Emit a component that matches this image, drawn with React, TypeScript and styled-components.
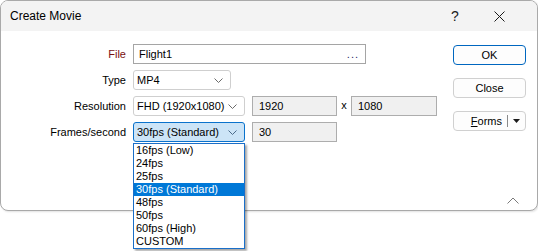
import React from "react";
import styled, { createGlobalStyle } from "styled-components";

const GlobalStyle = createGlobalStyle`
  html, body {
    margin: 0;
    min-height: 251px;
    background: #ffffff;
  }
  body {
    font-family: "Liberation Sans", Arial, sans-serif;
    font-size: 11px;
    color: #000;
  }
`;

const Window = styled.div`
  width: 538px;
  height: 211px;
  box-sizing: border-box;
  border: 1px solid #a9a9a9;
  border-radius: 8px;
  display: flex;
  flex-direction: column;
  background: #ffffff;
  box-shadow: 1px 1px 2px rgba(0, 0, 0, 0.12);
`;

const TitleBar = styled.div`
  height: 30px;
  display: flex;
  align-items: center;
  background: #f3f3f3;
  border-radius: 7px 7px 0 0;
  padding-left: 9px;
`;

const Title = styled.span`
  font-size: 12px;
  flex: 1;
`;

const TitleButton = styled.div<{ $end?: boolean }>`
  width: 44px;
  height: 30px;
  margin-right: ${(p) => (p.$end ? 16 : 0)}px;
  display: flex;
  align-items: center;
  justify-content: center;
  font-size: 14px;
  color: #1a1a1a;
`;

const Body = styled.div`
  flex: 1;
  display: flex;
  flex-direction: column;
`;

const Main = styled.div`
  display: flex;
  padding-top: 13px;
`;

const Form = styled.div`
  display: grid;
  grid-template-columns: 106px auto;
  column-gap: 7px;
  row-gap: 6px;
  padding-left: 19px;
  align-items: center;
`;

const Label = styled.label<{ $accent?: boolean }>`
  text-align: right;
  color: ${(p) => (p.$accent ? "#7a1010" : "#000")};
  font-size: 11px;
`;

const Row = styled.div`
  display: flex;
  align-items: center;
`;

const TextBox = styled.div<{ $w: number }>`
  width: ${(p) => p.$w}px;
  height: 20px;
  box-sizing: border-box;
  border: 1px solid #a5a5a5;
  background: #ffffff;
  display: flex;
  align-items: center;
  padding: 0 6px 0 5px;
`;

const Ellipsis = styled.span`
  margin-left: auto;
  color: #2a2a6a;
  letter-spacing: 1px;
`;

const ReadOnlyBox = styled.div<{ $w: number }>`
  width: ${(p) => p.$w}px;
  height: 20px;
  box-sizing: border-box;
  border: 1px solid #adadad;
  background: #f0f0f0;
  display: flex;
  align-items: center;
  padding-left: 6px;
`;

const Times = styled.span`
  width: 14px;
  text-align: center;
  padding-bottom: 2px;
`;

const SelectWrap = styled.div<{ $gap?: number }>`
  position: relative;
  margin-right: ${(p) => p.$gap ?? 0}px;
`;

const Select = styled.div<{ $w: number; $focused?: boolean }>`
  width: ${(p) => p.$w}px;
  height: 20px;
  box-sizing: border-box;
  border: 1px solid ${(p) => (p.$focused ? "#0a72cc" : "#cfcfcf")};
  border-radius: 3px;
  background: ${(p) => (p.$focused ? "#cce4f7" : "#ffffff")};
  display: flex;
  align-items: center;
  padding: 0 7px 0 3px;
`;

const SelectText = styled.span`
  flex: 1;
  white-space: nowrap;
`;

const List = styled.div`
  position: absolute;
  top: 21px;
  left: 0;
  width: 112px;
  box-sizing: border-box;
  border: 1px solid #1a6fc9;
  background: #ffffff;
  box-shadow: 2px 2px 2px rgba(0, 0, 0, 0.35);
  z-index: 5;
`;

const ListItem = styled.div<{ $selected?: boolean }>`
  height: 13px;
  line-height: 13px;
  padding-left: 2px;
  white-space: nowrap;
  background: ${(p) => (p.$selected ? "#0078d7" : "transparent")};
  color: ${(p) => (p.$selected ? "#ffffff" : "#000")};
`;

const ButtonColumn = styled.div`
  margin-left: auto;
  margin-right: 11px;
  padding-top: 1px;
  display: flex;
  flex-direction: column;
  gap: 13px;
`;

const Button = styled.div<{ $default?: boolean }>`
  width: 73px;
  height: 20px;
  box-sizing: border-box;
  border: 1px solid ${(p) => (p.$default ? "#0067c0" : "#d0d0d0")};
  border-radius: 4px;
  background: #fdfdfd;
  display: flex;
  align-items: center;
  justify-content: center;
  font-size: 11px;
`;

const SplitLabel = styled.span`
  flex: 1;
  text-align: right;
  padding-right: 5px;
`;

const SplitDivider = styled.span`
  width: 1px;
  height: 12px;
  background: #8a8a8a;
`;

const SplitArrow = styled.span`
  width: 17px;
  display: flex;
  justify-content: center;
`;

const Footer = styled.div`
  margin-top: auto;
  display: flex;
  justify-content: flex-end;
  padding: 0 18px 6px 0;
`;

const Chevron = ({ color = "#6b6b6b" }: { color?: string }) => (
  <svg width="9" height="5" viewBox="0 0 9 5">
    <polyline points="0.5,0.5 4.5,4.5 8.5,0.5" fill="none" stroke={color} strokeWidth="1" />
  </svg>
);

const fpsOptions = [
  "16fps (Low)",
  "24fps",
  "25fps",
  "30fps (Standard)",
  "48fps",
  "50fps",
  "60fps (High)",
  "CUSTOM",
];

export default function App() {
  return (
    <>
      <GlobalStyle />
      <Window>
        <TitleBar>
          <Title>Create Movie</Title>
          <TitleButton>?</TitleButton>
          <TitleButton $end>
            <svg width="11" height="11" viewBox="0 0 11 11">
              <path d="M0.5 0.5 L10.5 10.5 M10.5 0.5 L0.5 10.5" stroke="#1a1a1a" strokeWidth="1" />
            </svg>
          </TitleButton>
        </TitleBar>
        <Body>
          <Main>
            <Form>
              <Label $accent>File</Label>
              <TextBox $w={233}>
                Flight1
                <Ellipsis>...</Ellipsis>
              </TextBox>

              <Label>Type</Label>
              <Row>
                <Select $w={98}>
                  <SelectText>MP4</SelectText>
                  <Chevron />
                </Select>
              </Row>

              <Label>Resolution</Label>
              <Row>
                <SelectWrap $gap={7}>
                  <Select $w={112}>
                    <SelectText>FHD (1920x1080)</SelectText>
                    <Chevron />
                  </Select>
                </SelectWrap>
                <ReadOnlyBox $w={85}>1920</ReadOnlyBox>
                <Times>x</Times>
                <ReadOnlyBox $w={86}>1080</ReadOnlyBox>
              </Row>

              <Label>Frames/second</Label>
              <Row>
                <SelectWrap $gap={7}>
                  <Select $w={112} $focused>
                    <SelectText>30fps (Standard)</SelectText>
                    <Chevron color="#4a6a8a" />
                  </Select>
                  <List>
                    {fpsOptions.map((o) => (
                      <ListItem key={o} $selected={o === "30fps (Standard)"}>
                        {o}
                      </ListItem>
                    ))}
                  </List>
                </SelectWrap>
                <ReadOnlyBox $w={85}>30</ReadOnlyBox>
              </Row>
            </Form>

            <ButtonColumn>
              <Button $default>OK</Button>
              <Button>Close</Button>
              <Button>
                <SplitLabel>
                  <u>F</u>orms
                </SplitLabel>
                <SplitDivider />
                <SplitArrow>
                  <svg width="7" height="4" viewBox="0 0 7 4">
                    <polygon points="0,0 7,0 3.5,4" fill="#1a1a1a" />
                  </svg>
                </SplitArrow>
              </Button>
            </ButtonColumn>
          </Main>
          <Footer>
            <svg width="12" height="7" viewBox="0 0 12 7">
              <polyline points="0.5,6.5 6,1 11.5,6.5" fill="none" stroke="#7a7a7a" strokeWidth="1" />
            </svg>
          </Footer>
        </Body>
      </Window>
    </>
  );
}
